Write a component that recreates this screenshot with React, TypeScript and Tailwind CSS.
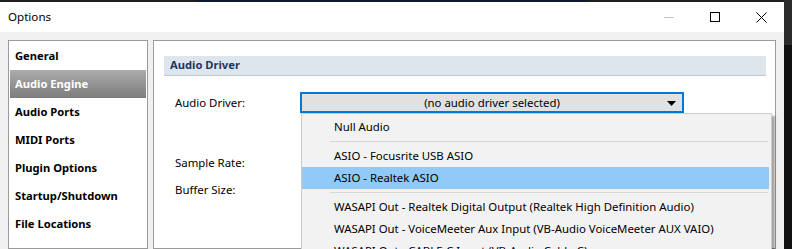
import { useState } from 'react'

const navItems = [
  'General',
  'Audio Engine',
  'Audio Ports',
  'MIDI Ports',
  'Plugin Options',
  'Startup/Shutdown',
  'File Locations',
  'Keyboard & Controls',
]

type DriverItem = { label: string } | { separator: true }

const drivers: DriverItem[] = [
  { label: 'Null Audio' },
  { separator: true },
  { label: 'ASIO - Focusrite USB ASIO' },
  { label: 'ASIO - Realtek ASIO' },
  { separator: true },
  { label: 'WASAPI Out - Realtek Digital Output (Realtek High Definition Audio)' },
  { label: 'WASAPI Out - VoiceMeeter Aux Input (VB-Audio VoiceMeeter AUX VAIO)' },
  { label: 'WASAPI Out - CABLE-C Input (VB-Audio Cable C)' },
]

function TitleBar() {
  return (
    <div className="flex h-[30px] shrink-0 items-center bg-white text-[11.6px] text-black">
      <span className="pl-[8px]">Options</span>
      <div className="ml-auto flex h-full items-center">
        <div className="flex h-full w-[46px] items-center justify-center">
          <div className="h-px w-[10px] bg-[#c6c6c6]" />
        </div>
        <div className="flex h-full w-[46px] items-center justify-center">
          <div className="h-[10px] w-[10px] border border-black" />
        </div>
        <div className="flex h-full w-[46px] items-center justify-center">
          <svg width="11" height="11" viewBox="0 0 11 11">
            <path d="M0.5 0.5 L10.5 10.5 M10.5 0.5 L0.5 10.5" stroke="#000" strokeWidth="1" fill="none" />
          </svg>
        </div>
      </div>
    </div>
  )
}

function NavList() {
  const [active, setActive] = useState('Audio Engine')
  return (
    <div className="flex w-[140px] shrink-0 flex-col overflow-hidden border border-[#9a9a9a] bg-white px-px pt-px">
      {navItems.map((item) => (
        <button
          key={item}
          onClick={() => setActive(item)}
          className={
            item === active
              ? 'flex h-[28px] shrink-0 items-center whitespace-nowrap bg-linear-to-b from-[#acacac] to-[#7c7c7c] pl-[5px] text-left text-[11.2px] font-bold text-white'
              : 'flex h-[28px] shrink-0 items-center whitespace-nowrap pl-[5px] text-left text-[11.2px] font-bold text-black'
          }
        >
          {item}
        </button>
      ))}
    </div>
  )
}

function DriverDropdown() {
  return (
    <div className="absolute left-px top-[21px] z-10 w-[471px] border border-[#cccccc] bg-[#f2f2f2] pt-[2px] shadow-[3px_3px_2px_rgba(0,0,0,0.35)]">
      {drivers.map((d, i) =>
        'separator' in d ? (
          <div key={i} className="py-[3px] pl-[28px] pr-[3px]">
            <div className="h-px bg-[#d7d7d7]" />
          </div>
        ) : (
          <div
            key={i}
            className={
              d.label === 'ASIO - Realtek ASIO'
                ? 'mr-[2px] flex h-[22px] items-center whitespace-nowrap bg-[#91c9f7] pl-[32px]'
                : 'mr-[2px] flex h-[22px] items-center whitespace-nowrap pl-[32px]'
            }
          >
            {d.label}
          </div>
        )
      )}
    </div>
  )
}

function AudioEnginePanel() {
  return (
    <div className="flex w-[623px] shrink-0 flex-col border border-[#9a9a9a] bg-white text-[11.4px] text-black">
      <div className="ml-[10px] mr-[9px] mt-[15px] flex h-[20px] shrink-0 items-center border-b border-[#c2c8cc] bg-[#dde6ed] pl-[6px] text-[11.2px] font-bold text-[#1f3566]">
        Audio Driver
      </div>

      <div className="mt-[16px] flex shrink-0 items-center pl-[21px]">
        <span className="w-[125px]">Audio Driver:</span>
        <div className="relative">
          <div className="flex h-[21px] w-[384px] items-center justify-center border-2 border-[#0078d7] bg-[#e1e1e1]">
            <span>(no audio driver selected)</span>
            <svg className="absolute right-[8px] top-[9px]" width="9" height="5" viewBox="0 0 9 5">
              <path d="M0 0 H9 L4.5 5 Z" fill="#000" />
            </svg>
          </div>
          <DriverDropdown />
        </div>
      </div>

      <div className="mt-[40px] flex h-[20px] shrink-0 items-center pl-[21px]">
        <span>Sample Rate:</span>
      </div>
      <div className="mt-[7px] flex h-[20px] shrink-0 items-center pl-[21px]">
        <span>Buffer Size:</span>
      </div>
    </div>
  )
}

export default function App() {
  return (
    <div
      className="flex h-[249px] w-[792px] overflow-hidden bg-[#111111]"
      style={{ fontFamily: '"Noto Sans", "Open Sans", sans-serif' }}
    >
      <div className="flex w-[784px] shrink-0 flex-col bg-[#f0f0f0]">
        <div className="flex h-[2px] shrink-0">
          <div className="w-[197px] bg-[#1e1e1e]" />
          <div className="w-[390px] bg-[#0d1b30]" />
          <div className="flex-1 bg-[#1e1e1e]" />
        </div>
        <TitleBar />
        <div className="flex min-h-0 flex-1 gap-[5px] pl-[8px] pt-[8px]">
          <NavList />
          <AudioEnginePanel />
        </div>
      </div>
      <div className="flex flex-1 flex-col">
        <div className="h-[45px] bg-[#2b2b2b]" />
        <div className="flex-1 bg-[#111111]" />
      </div>
    </div>
  )
}
